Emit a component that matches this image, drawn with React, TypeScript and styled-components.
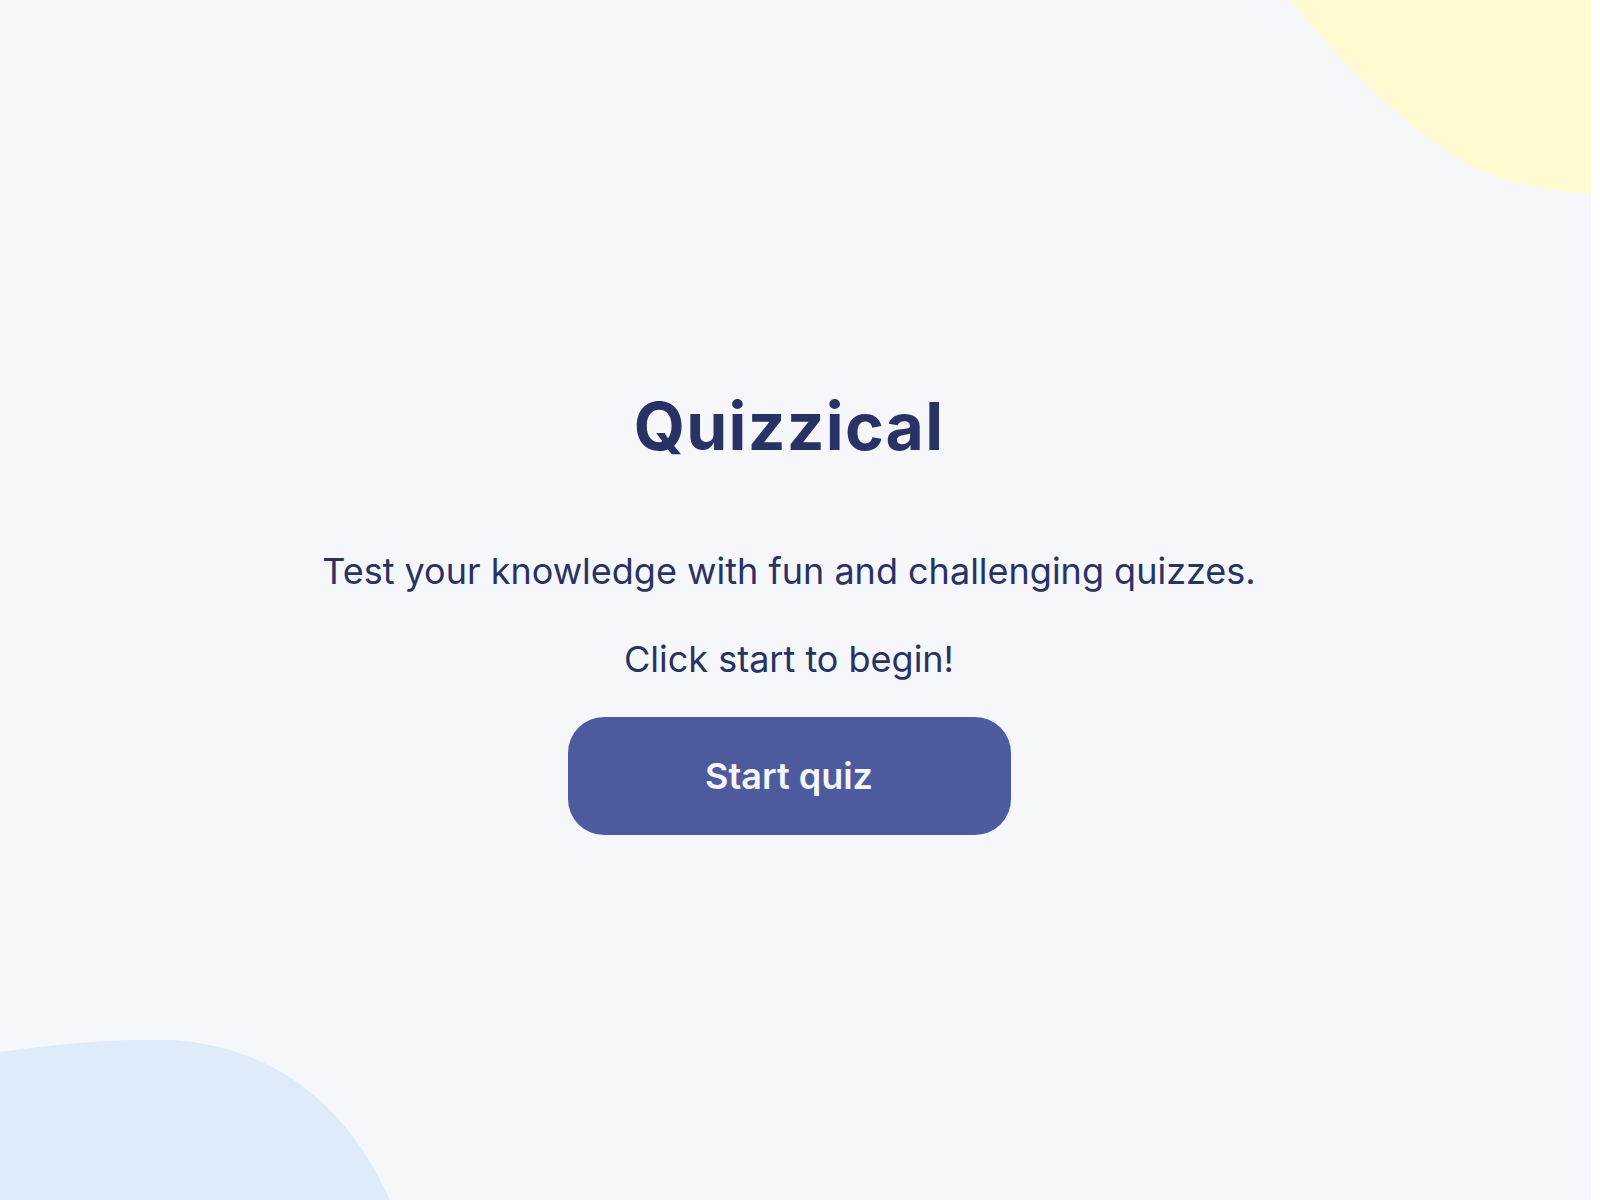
// 퀴즈 시작 화면
import styled, { createGlobalStyle } from "styled-components";

const GlobalStyle = createGlobalStyle`
    body {
        margin: 0;
        background-color: #ffffff;
        font-family: Inter, "Noto Sans", sans-serif;
    }
`;

const Page = styled.main`
    position: relative;
    width: 1591px;
    height: 100vh;
    overflow: hidden;

    background-color: #f5f7fb;
    color: #293264;
`;

// 배경 장식 (노란색 / 파란색 blob)
const TopBlob = styled.svg`
    position: absolute;
    top: 0;
    right: 0;
`;

const BottomBlob = styled.svg`
    position: absolute;
    bottom: 0;
    left: 0;
`;

const Intro = styled.section`
    position: relative;

    display: flex;
    flex-direction: column;
    align-items: center;

    padding: 393px 13px 0 0;
`;

const Title = styled.h1`
    margin: 0;
    font-size: 66px;
    line-height: 1;
    font-weight: 700;
    letter-spacing: 1.25px;
`;

const Description = styled.p<{ $gap: number }>`
    margin: ${(props) => props.$gap}px 0 0;
    font-size: 36px;
    line-height: 1;
    font-weight: 400;
`;

const StartButton = styled.button`
    width: 443px;
    height: 118px;
    margin-top: 40px;

    border: none;
    border-radius: 36px;
    background-color: #4d5b9e;
    color: #f5f7fb;

    font-family: Inter, "Noto Sans", sans-serif;
    font-size: 36px;
    line-height: 1;
    font-weight: 600;
    cursor: pointer;
`;

function App() {
    return (
        <>
            <GlobalStyle />
            <Page>
                <TopBlob width="301" height="193" viewBox="0 0 301 193">
                    <path
                        d="M0 0 C50 60 130 150 210 178 C250 190 280 193 301 193 L301 0 Z"
                        fill="#fffad1"
                    />
                </TopBlob>
                <BottomBlob width="390" height="160" viewBox="0 0 390 160">
                    <path
                        d="M0 12 C60 4 120 -2 170 0 C260 5 340 50 390 160 L0 160 Z"
                        fill="#deebf8"
                    />
                </BottomBlob>

                <Intro>
                    <Title>Quizzical</Title>
                    <Description $gap={94}>
                        Test your knowledge with fun and challenging quizzes.
                    </Description>
                    <Description $gap={52}>Click start to begin!</Description>
                    <StartButton>Start quiz</StartButton>
                </Intro>
            </Page>
        </>
    );
}

export default App;
